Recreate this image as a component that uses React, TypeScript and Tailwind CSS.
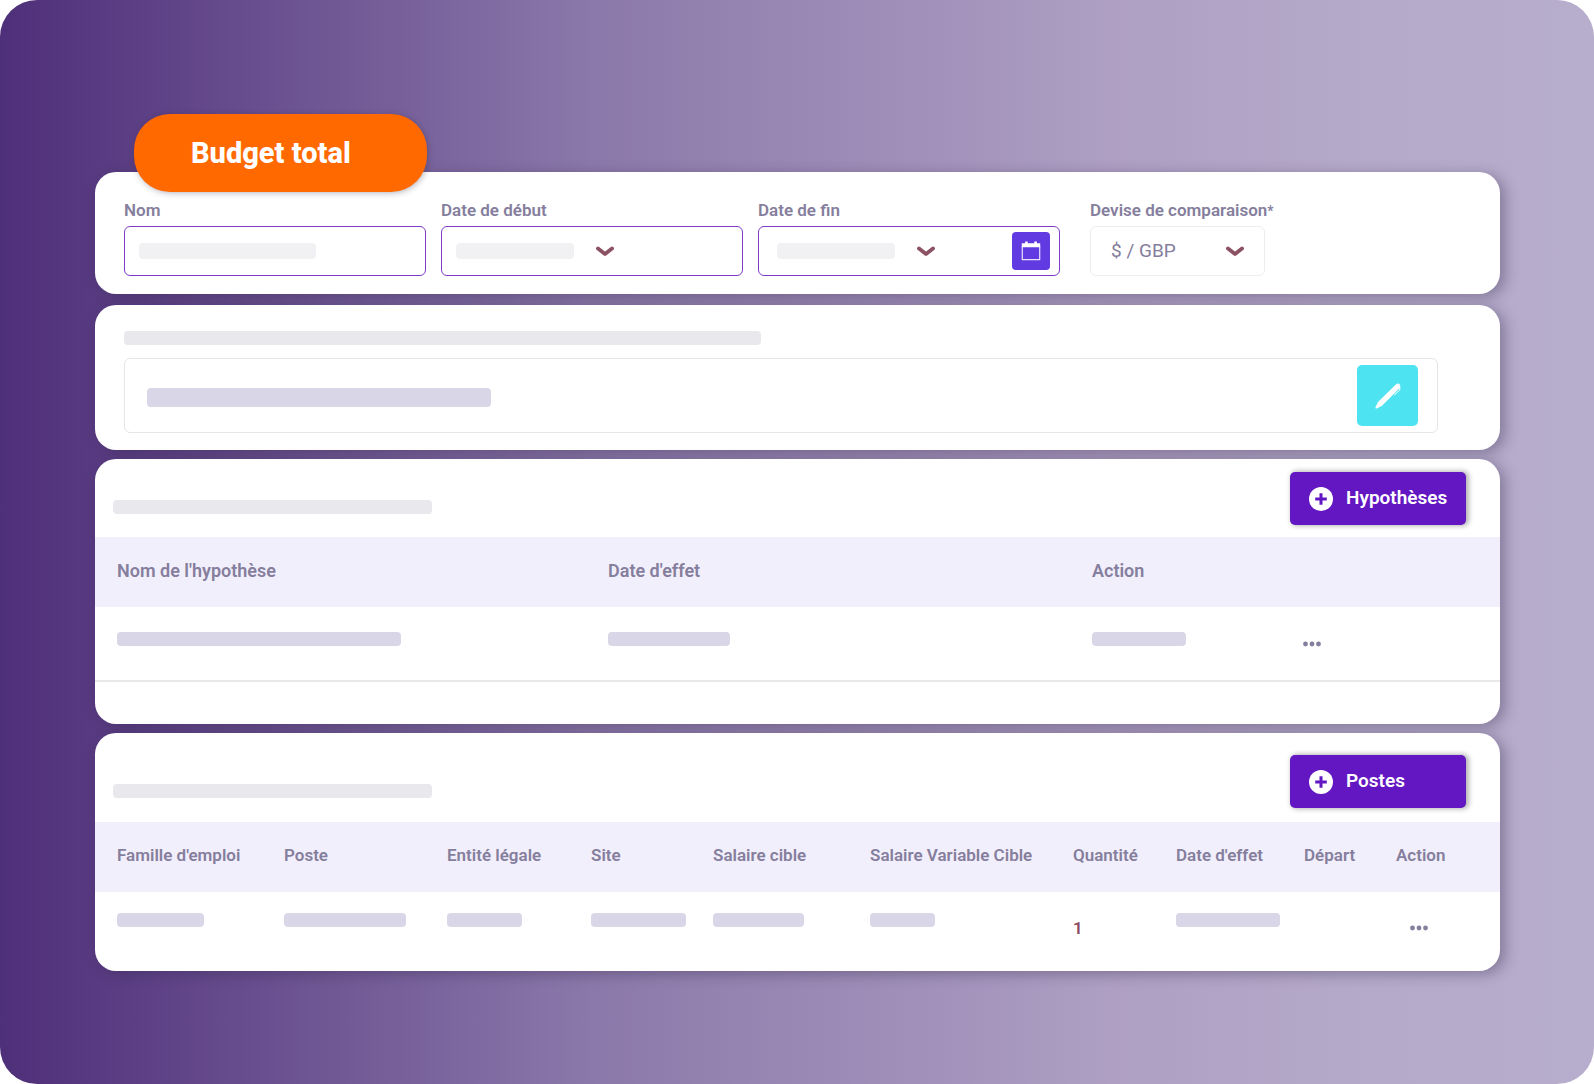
import type { ReactNode } from "react";

function Bar({ className }: { className: string }) {
  return <span aria-hidden="true" className={`block shrink-0 rounded ${className}`} />;
}

function Chevron({ className = "" }: { className?: string }) {
  return (
    <svg className={`shrink-0 ${className}`} width="18" height="11" viewBox="0 0 18 11" fill="none" aria-hidden="true">
      <path d="M2 2.4L9 8L16 2.4" stroke="#8c5264" strokeWidth="3.8" strokeLinecap="round" strokeLinejoin="round" />
    </svg>
  );
}

function CalendarIcon() {
  return (
    <svg width="20" height="20" viewBox="0 0 20 20" aria-hidden="true">
      <path d="M.8 2.200h3.300V.5h2.600v1.700h6.600V.5h2.600v1.700h3.300v4H.8z" fill="#fff" />
      <path d="M1.300 5v13.700h17.400V5" fill="none" stroke="#fff" strokeOpacity=".85" strokeWidth="1.200" />
    </svg>
  );
}

function PenIcon() {
  return (
    <svg width="26" height="26" viewBox="0 0 26 26" aria-hidden="true">
      <path
        d="M.5 25.300Q.3 24.600.8 23.600L3 19L17.500 4.800L20.600 1.800Q22.400.4 24 .6L25.300 2.200Q25.400 4 24.200 5.600L21.200 8.600L7 22.700L2.300 25.200Q1.200 25.700.5 25.300Z"
        fill="#fff"
      />
      <path d="M24.800 3.500V7L19.200 12" fill="none" stroke="#fff" strokeWidth="1" />
    </svg>
  );
}

function PlusIcon() {
  return (
    <svg className="shrink-0" width="24" height="24" viewBox="0 0 24 24" aria-hidden="true">
      <circle cx="12" cy="12" r="12" fill="#fff" />
      <path d="M12 6.200v11.600M6.200 12h11.600" stroke="#6317c3" strokeWidth="3" />
    </svg>
  );
}

function MoreButton({ label }: { label: string }) {
  return (
    <button type="button" aria-label={label} className="block">
      <svg width="18" height="6" viewBox="0 0 18 6" fill="#857e9d" aria-hidden="true">
        <circle cx="2.500" cy="3" r="2.400" />
        <circle cx="9" cy="3" r="2.400" />
        <circle cx="15.500" cy="3" r="2.400" />
      </svg>
    </button>
  );
}

function Card({ children, className = "" }: { children: ReactNode; className?: string }) {
  return (
    <section className={`rounded-[21px] bg-white shadow-[5px_3px_14px_rgba(50,40,70,0.38)] ${className}`}>
      {children}
    </section>
  );
}

function AddButton({ children }: { children: ReactNode }) {
  return (
    <button
      type="button"
      className="flex h-[53px] w-[176px] items-center gap-[13px] rounded-[5px] bg-[#6317c3] pl-[19px] text-[19px] font-semibold text-white shadow-[2px_0px_5px_1px_rgba(0,0,0,0.3)]"
    >
      <PlusIcon />
      {children}
    </button>
  );
}

const labelClass = "block text-[17px] leading-5 font-semibold whitespace-nowrap text-[#857e9d]";
const boxClass = "relative mt-1.5 flex h-[50px] items-center rounded-md border border-[#7d3cc8]";
const controlClass = "absolute inset-0 w-full appearance-none rounded-md bg-transparent px-4";

const hypothesisColumns = [
  { title: "Nom de l'hypothèse", col: "w-[513px]", bar: "w-[284px]" },
  { title: "Date d'effet", col: "w-[484px]", bar: "w-[122px]" },
  { title: "Action", col: "w-[211px]", bar: "w-[94px]" },
];

const positionColumns = [
  { title: "Famille d'emploi", col: "w-[189px]", bar: "w-[87px]" },
  { title: "Poste", col: "w-[163px]", bar: "w-[122px]" },
  { title: "Entité légale", col: "w-[144px]", bar: "w-[75px]" },
  { title: "Site", col: "w-[122px]", bar: "w-[95px]" },
  { title: "Salaire cible", col: "w-[157px]", bar: "w-[91px]" },
  { title: "Salaire Variable Cible", col: "w-[203px]", bar: "w-[65px]" },
  { title: "Quantité", col: "w-[103px]", value: "1" },
  { title: "Date d'effet", col: "w-[128px]", bar: "w-[104px]" },
  { title: "Départ", col: "w-[92px]" },
];

export default function App() {
  return (
    <main className="min-h-screen rounded-[37px] bg-[linear-gradient(90deg,#4e2f79_0%,#5b3e84_8%,#8b78aa_37%,#ae9fc3_70%,#b4a9c9_84%,#b7adcd_100%)] pt-[114px] pr-[94px] pb-[113px] pl-[95px] font-['Roboto',sans-serif]">
      <h1 className="relative z-10 -mb-5 ml-[39px] flex h-[78px] w-[293px] items-center rounded-[36px] bg-[#ff6900] pt-0.5 pl-[57px] text-[29px] font-extrabold text-white shadow-[1px_1px_6px_rgba(50,40,70,0.35)]">
        Budget total
      </h1>

      <Card className="grid h-[122px] grid-cols-[302fr_302fr_302fr_190fr] gap-[15px] pt-7 pr-[235px] pl-[29px]">
        <div className="min-w-0">
          <label htmlFor="nom" className={labelClass}>Nom</label>
          <div className={boxClass}>
            <Bar className="ml-[14px] h-4 w-[177px] bg-[#f1f1f3]" />
            <input id="nom" type="text" className={controlClass} />
          </div>
        </div>
        <div className="min-w-0">
          <label htmlFor="debut" className={labelClass}>Date de début</label>
          <div className={boxClass}>
            <Bar className="ml-[14px] h-4 w-[118px] bg-[#f1f1f3]" />
            <Chevron className="ml-[22px]" />
            <select id="debut" className={controlClass} />
          </div>
        </div>
        <div className="min-w-0">
          <label htmlFor="fin" className={labelClass}>Date de fin</label>
          <div className={boxClass}>
            <Bar className="ml-[18px] h-4 w-[118px] bg-[#f1f1f3]" />
            <Chevron className="ml-[22px]" />
            <select id="fin" className={controlClass} />
            <button
              type="button"
              aria-label="Ouvrir le calendrier"
              className="relative mr-[9px] ml-auto flex size-[38px] items-center justify-center rounded bg-[#613ae2]"
            >
              <CalendarIcon />
            </button>
          </div>
        </div>
        <div className="min-w-0 pl-[15px]">
          <label htmlFor="devise" className={labelClass}>
            Devise de comparaison<span className="text-sm leading-none">*</span>
          </label>
          <div className="relative mt-1.5 flex h-[50px] items-center">
            <select
              id="devise"
              className="size-full appearance-none rounded-md border border-[#ededf0] bg-transparent pl-5 text-[19px] text-[#857e9d]"
            >
              <option>$ / GBP</option>
            </select>
            <Chevron className="pointer-events-none absolute right-[21px]" />
          </div>
        </div>
      </Card>

      <Card className="mt-[11px] h-[145px] pt-[26px] pr-[62px] pl-[29px]">
        <Bar className="h-3.5 w-[637px] bg-[#e8e8ed]" />
        <div className="mt-[13px] flex h-[75px] items-center justify-between rounded-md border border-[#e6e6e8] pr-[19px] pl-[22px]">
          <Bar className="mt-1 h-[19px] w-[344px] bg-[#d9d6e7]" />
          <button
            type="button"
            aria-label="Modifier"
            className="flex size-[61px] items-center justify-center rounded-[5px] bg-[#4de3f0]"
          >
            <PenIcon />
          </button>
        </div>
      </Card>

      <Card className="mt-[9px] h-[265px]">
        <div className="flex h-[78px] items-start justify-between pt-[13px] pr-[34px] pl-[18px]">
          <Bar className="mt-7 h-3.5 w-[319px] bg-[#e8e8ed]" />
          <AddButton>Hypothèses</AddButton>
        </div>
        <table className="w-full table-fixed text-left">
          <colgroup>
            {hypothesisColumns.map((c) => (
              <col key={c.title} className={c.col} />
            ))}
            <col className="w-[197px]" />
          </colgroup>
          <thead>
            <tr className="h-[70px] bg-[#f2effc] text-lg text-[#857e9d]">
              {hypothesisColumns.map((c) => (
                <th key={c.title} scope="col" className="p-0 pb-[3px] font-semibold first:pl-[22px]">{c.title}</th>
              ))}
              <td />
            </tr>
          </thead>
          <tbody>
            <tr className="h-[74px] border-b-2 border-[#e8e8ea]">
              {hypothesisColumns.map((c) => (
                <td key={c.title} className="p-0 pt-[25px] align-top first:pl-[22px]">
                  <Bar className={`h-3.5 bg-[#d9d6e7] ${c.bar}`} />
                </td>
              ))}
              <td className="p-0 pt-[34px] align-top">
                <MoreButton label="Actions de l'hypothèse" />
              </td>
            </tr>
          </tbody>
        </table>
      </Card>

      <Card className="mt-[9px] h-[238px]">
        <div className="flex h-[89px] items-start justify-between pt-[22px] pr-[34px] pl-[18px]">
          <Bar className="mt-[29px] h-3.5 w-[319px] bg-[#e8e8ed]" />
          <AddButton>Postes</AddButton>
        </div>
        <table className="w-full table-fixed text-left">
          <colgroup>
            {positionColumns.map((c) => (
              <col key={c.title} className={c.col} />
            ))}
            <col className="w-[104px]" />
          </colgroup>
          <thead>
            <tr className="h-[70px] bg-[#f2effc] text-[17px] text-[#857e9d]">
              {positionColumns.map((c) => (
                <th key={c.title} scope="col" className="p-0 pb-[3px] font-semibold whitespace-nowrap first:pl-[22px]">{c.title}</th>
              ))}
              <th scope="col" className="p-0 pb-[3px] font-semibold">Action</th>
            </tr>
          </thead>
          <tbody>
            <tr>
              {positionColumns.map((c) => (
                <td key={c.title} className="p-0 pt-[21px] align-top first:pl-[22px]">
                  {c.bar && <Bar className={`h-3.5 bg-[#d9d6e7] ${c.bar}`} />}
                  {c.value && <span className="block pt-[3px] text-[17px] font-semibold text-[#8c4a5e]">{c.value}</span>}
                </td>
              ))}
              <td className="p-0 pt-[33px] pl-3.5 align-top">
                <MoreButton label="Actions du poste" />
              </td>
            </tr>
          </tbody>
        </table>
      </Card>
    </main>
  );
}
